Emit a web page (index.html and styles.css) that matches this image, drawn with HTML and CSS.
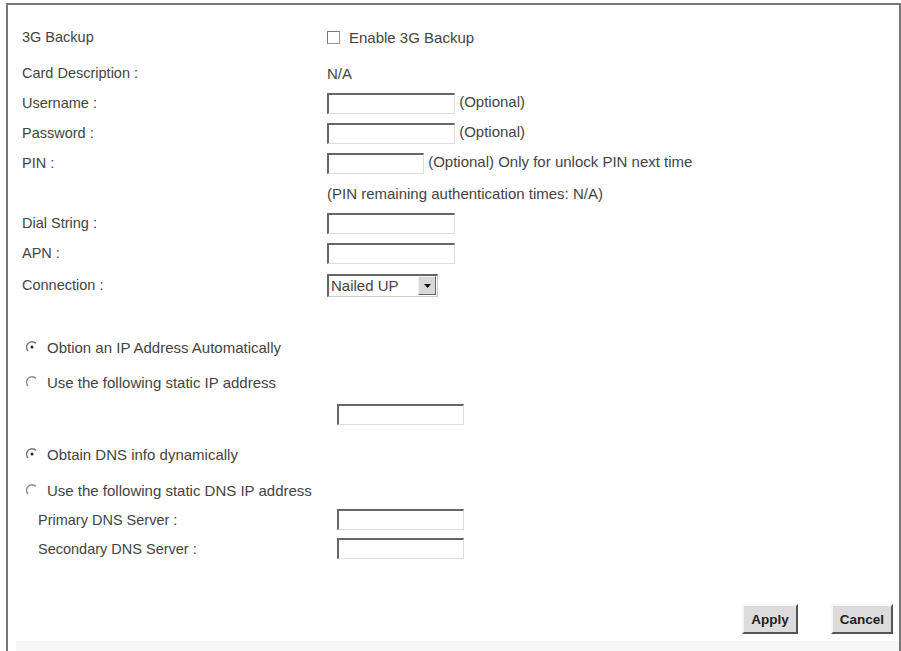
FILE: index.html
```html
<!DOCTYPE html>
<html lang="en">

<head>
  <meta charset="UTF-8">
  <meta name="viewport" content="width=device-width, initial-scale=1.0">
  <link rel="stylesheet" href="styles.css">
  <title>3G Backup</title>
</head>

<body>
  <div class="frame">
    <form class="panel">
      <div class="row first">
        <span class="label">3G Backup</span>
        <label class="check"><span class="box"></span>Enable 3G Backup</label>
      </div>
      <div class="row second">
        <span class="label">Card Description :</span>
        <span>N/A</span>
      </div>
      <div class="row">
        <span class="label">Username :</span>
        <span><span class="field wide"></span> (Optional)</span>
      </div>
      <div class="row">
        <span class="label">Password :</span>
        <span><span class="field wide"></span> (Optional)</span>
      </div>
      <div class="row">
        <span class="label">PIN :</span>
        <span><span class="field short"></span> (Optional) Only for unlock PIN next time</span>
      </div>
      <div class="row">
        <span class="label"></span>
        <span>(PIN remaining authentication times: N/A)</span>
      </div>
      <div class="row">
        <span class="label">Dial String :</span>
        <span class="field wide"></span>
      </div>
      <div class="row">
        <span class="label">APN :</span>
        <span class="field wide"></span>
      </div>
      <div class="row conn">
        <span class="label">Connection :</span>
        <span class="select">
          <span class="select-text">Nailed UP</span>
          <span class="select-btn">
            <svg width="9" height="6" viewBox="0 0 9 6"><path d="M1 1h7L4.5 5z" fill="#111"/></svg>
          </span>
        </span>
      </div>

      <div class="radio r1">
        <svg class="dot" width="12" height="12" viewBox="0 0 12 12">
          <path d="M10 2.5A5 5 0 0 0 2 10" fill="none" stroke="#777" stroke-width="1.4"/>
          <circle cx="6" cy="6" r="1.5" fill="#222"/>
        </svg>
        Obtion an IP Address Automatically
      </div>
      <div class="radio r2">
        <svg class="dot" width="12" height="12" viewBox="0 0 12 12">
          <path d="M10 2.5A5 5 0 0 0 2 10" fill="none" stroke="#888" stroke-width="1.4"/>
        </svg>
        Use the following static IP address
      </div>
      <div class="row ip">
        <span class="label"></span>
        <span class="field dns"></span>
      </div>
      <div class="radio r3">
        <svg class="dot" width="12" height="12" viewBox="0 0 12 12">
          <path d="M10 2.5A5 5 0 0 0 2 10" fill="none" stroke="#777" stroke-width="1.4"/>
          <circle cx="6" cy="6" r="1.5" fill="#222"/>
        </svg>
        Obtain DNS info dynamically
      </div>
      <div class="radio r4">
        <svg class="dot" width="12" height="12" viewBox="0 0 12 12">
          <path d="M10 2.5A5 5 0 0 0 2 10" fill="none" stroke="#888" stroke-width="1.4"/>
        </svg>
        Use the following static DNS IP address
      </div>
      <div class="row sub">
        <span class="label">Primary DNS Server :</span>
        <span class="field dns"></span>
      </div>
      <div class="row sub">
        <span class="label">Secondary DNS Server :</span>
        <span class="field dns"></span>
      </div>

      <div class="buttons">
        <button type="button" class="btn">Apply</button>
        <button type="button" class="btn">Cancel</button>
      </div>
    </form>
    <div class="foot"></div>
  </div>
</body>

</html>
```

FILE: styles.css
```css
body {
  margin: 0;
  background: #fff;
  font-family: "Liberation Sans", Arial, sans-serif;
  font-size: 15px;
  color: #444;
}

.frame {
  margin: 3px 0 0 6px;
  height: 660px;
  border: 2px solid #777;
  border-bottom: none;
}

.panel {
  padding: 17px 0 0 14px;
}

.row {
  display: grid;
  grid-template-columns: 305px 1fr;
  align-items: center;
  height: 30px;
}

.label {
  font-size: 14.5px;
}

.second {
  margin-top: 6px;
}

.conn {
  margin-top: 2px;
}

.check {
  display: flex;
  align-items: center;
  gap: 9px;
}

.box {
  width: 11px;
  height: 11px;
  border: 1px solid #999;
  border-top-color: #777;
  border-left-color: #777;
  background: #fff;
}

.field {
  display: inline-block;
  vertical-align: middle;
  height: 18px;
  background: #fff;
  border-top: 2px solid #666;
  border-left: 2px solid #666;
  border-right: 1px solid #ddd;
  border-bottom: 1px solid #ddd;
}

.wide {
  width: 125px;
}

.short {
  width: 94px;
}

.dns {
  width: 124px;
  margin-left: 10px;
}

.select {
  display: flex;
  align-items: center;
  justify-content: space-between;
  width: 107px;
  height: 20px;
  border-top: 2px solid #666;
  border-left: 2px solid #666;
  border-right: 1px solid #ccc;
  border-bottom: 1px solid #ccc;
  padding-right: 1px;
}

.select-text {
  padding-left: 2px;
}

.select-btn {
  display: flex;
  align-items: center;
  justify-content: center;
  width: 16px;
  height: 17px;
  background: #d8d8d8;
  border: 1px solid #f4f4f4;
  border-right-color: #666;
  border-bottom-color: #666;
}

.radio {
  display: flex;
  align-items: center;
  gap: 9px;
  height: 30px;
  margin-left: 4px;
}

.r1 {
  margin-top: 32px;
}

.r2 {
  margin-top: 5px;
}

.ip {
  margin-top: 2px;
}

.r3 {
  margin-top: 10px;
}

.r4 {
  margin-top: 6px;
}

.sub {
  height: 29px;
  padding-left: 16px;
  grid-template-columns: 289px 1fr;
}

.buttons {
  display: flex;
  justify-content: flex-end;
  gap: 33px;
  margin: 41px 6px 0 0;
}

.btn {
  height: 30px;
  padding: 0 7px;
  font-family: "Liberation Sans", Arial, sans-serif;
  font-size: 13.5px;
  font-weight: bold;
  color: #222;
  background: #dcdcdc;
  border: 2px solid;
  border-color: #f6f6f6 #555 #555 #f6f6f6;
}

.foot {
  margin: 7px 0 0 8px;
  height: 20px;
  background: #f6f6f6;
}
```
